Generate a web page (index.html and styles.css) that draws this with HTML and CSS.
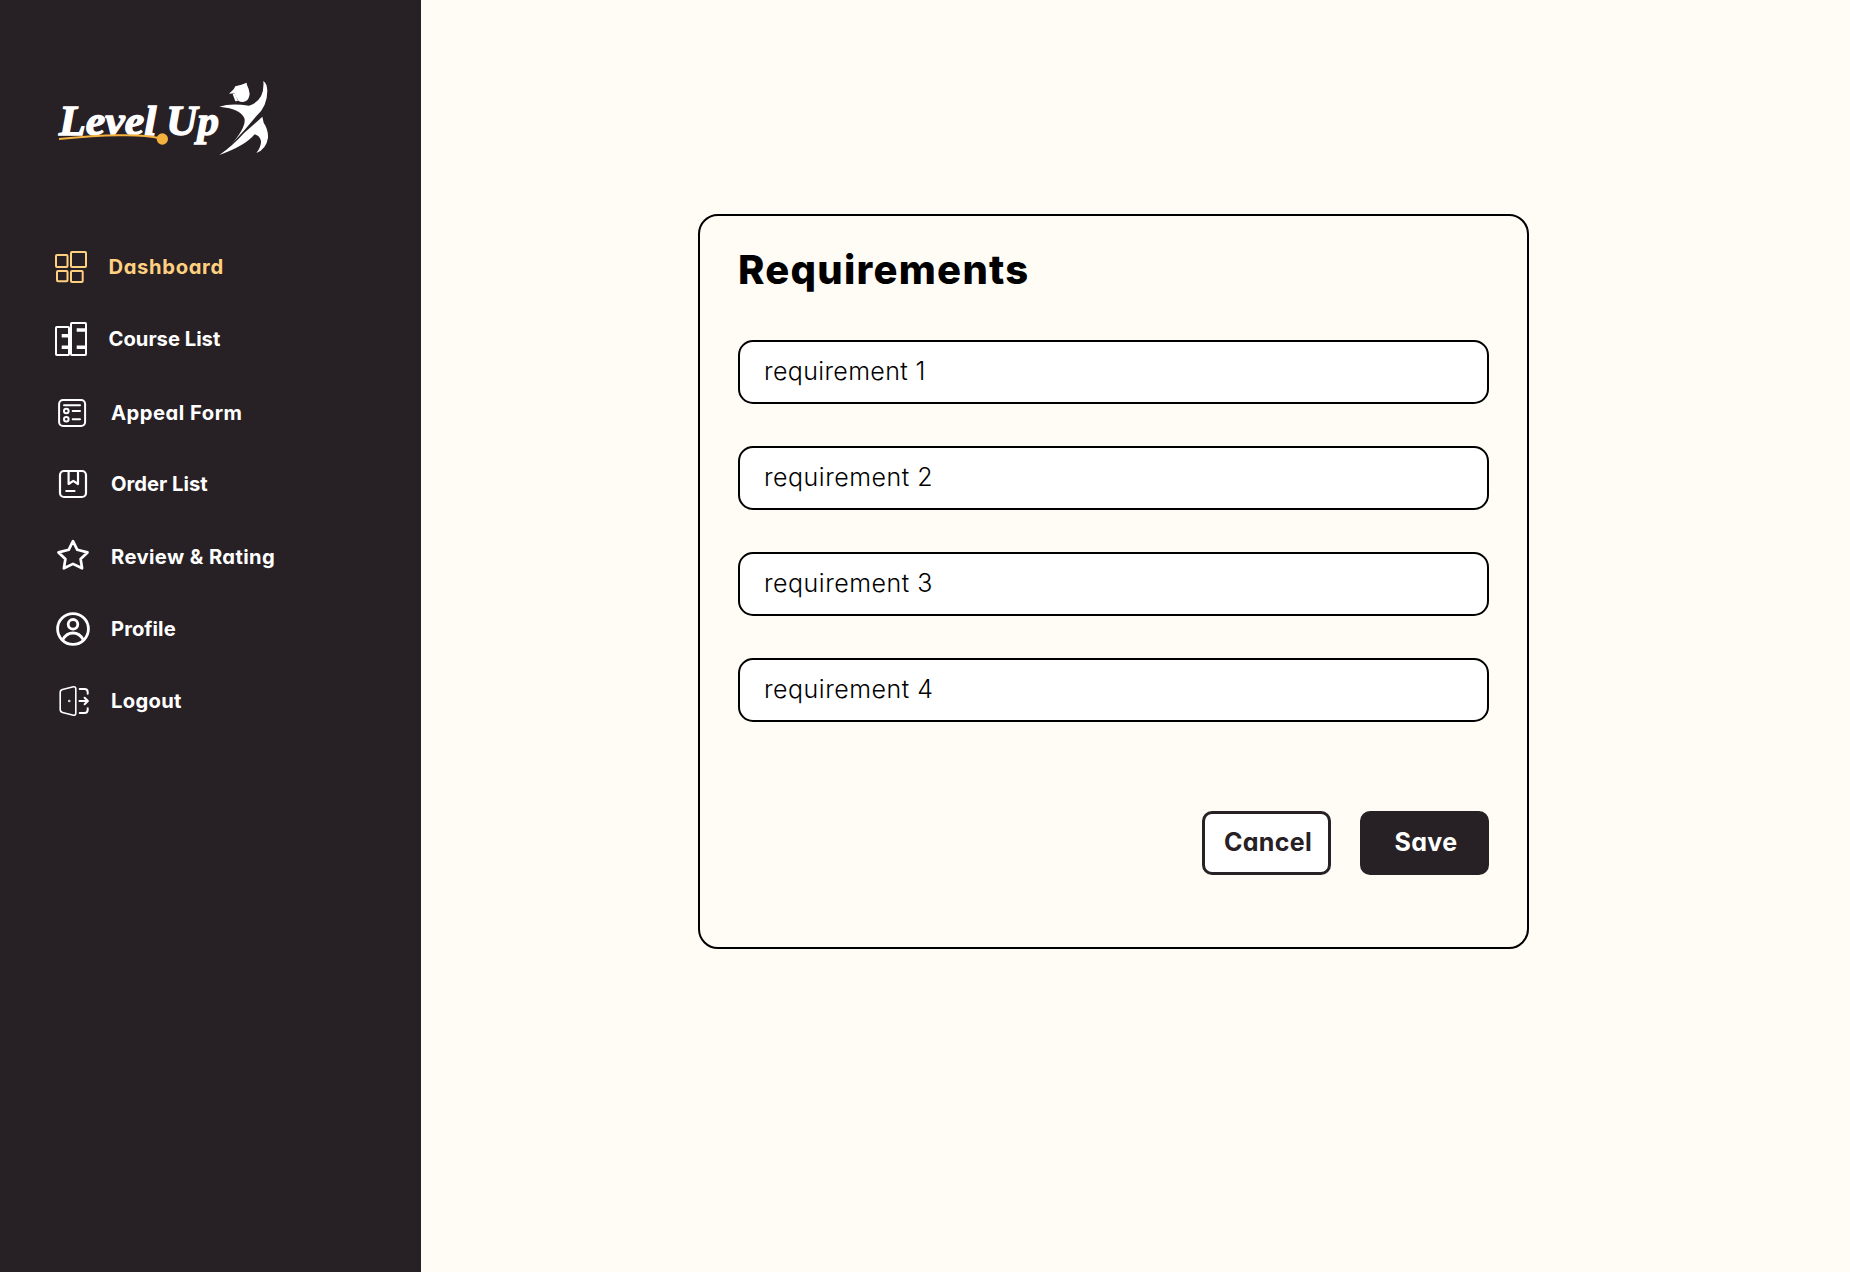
FILE: index.html
```
<!DOCTYPE html>
<html lang="en">
<head>
<meta charset="utf-8">
<title>Level Up – Requirements</title>
<link rel="stylesheet" href="styles.css">
</head>
<body>
<div class="layout">
  <aside class="sidebar">
    <svg class="logo" viewBox="0 0 720 285" role="img" aria-label="Level Up">
      <g class="logo-text">
        <text x="42" y="194" textLength="292" lengthAdjust="spacingAndGlyphs">Level</text>
        <text x="364" y="194" textLength="158" lengthAdjust="spacingAndGlyphs">Up</text>
      </g>
      <path class="swoosh" d="M42 207 Q150 197 220 196 Q300 194 345 205"/>
      <circle class="dot" cx="352" cy="207" r="17"/>
      <g class="figure">
        <path d="M552 71 L566 58 L571 49 Q590 44 605 38 L606 45 Q613 58 614 72 Q612 88 603 93 Q590 99 580 92 L572 79 L569 70 Z"/>
        <path d="M563 72 L569 70 L579 93 L571 94 Z"/>
        <path d="M523 110 Q556 99 612 107 Q660 92 655 33 Q666 40 667 62 Q667 108 635 137 L598 181 L557 225 Q601 176 599 148 Q591 116 523 110 Z"/>
        <path d="M523 255 Q565 225 598 188 L644 148 L652 140 L656 158 Q670 178 669 203 Q664 237 634 249 Q649 230 648 213 Q644 197 629 193 Q600 228 523 255 Z"/>
      </g>
    </svg>
    <nav class="menu">
      <a class="item item-dashboard active">
        <svg class="icon" viewBox="0 0 40 40" stroke-width="2"><rect x="5" y="8" width="11.5" height="12" rx="1"/><rect x="20" y="5" width="15" height="15" rx="1"/><rect x="6" y="24" width="10.5" height="10.3" rx="1"/><rect x="20" y="24" width="11.7" height="11" rx="1"/></svg>
        <span>Dashboard</span>
      </a>
      <a class="item item-courses">
        <svg class="icon" viewBox="0 0 40 40" stroke-width="2"><rect x="5" y="8" width="13" height="28" rx=".8"/><rect x="20" y="4" width="15" height="32" rx=".8"/><path stroke-width="3.6" d="M10.7 16.7H17M10.7 28.3H17M25.7 11H35M25.7 28.3H35"/></svg>
        <span>Course List</span>
      </a>
      <a class="item item-appeal">
        <svg class="icon" viewBox="0 0 40 40" stroke-width="2" stroke-linecap="round"><rect x="8.1" y="7" width="26" height="26" rx="4"/><path d="M13 12.3H29M21.7 18H29M21.7 26.3H29"/><circle cx="15.3" cy="18" r="2.3"/><circle cx="15.3" cy="26.3" r="2.3"/></svg>
        <span>Appeal Form</span>
      </a>
      <a class="item item-orders">
        <svg class="icon" viewBox="0 0 40 40" stroke-width="2.2" stroke-linecap="round" stroke-linejoin="round"><rect x="9" y="7" width="26" height="26" rx="4"/><path d="M17.6 7V20L22.3 16.8L27 20V7M15.3 27H23.5"/></svg>
        <span>Order List</span>
      </a>
      <a class="item item-reviews">
        <svg class="icon" viewBox="0 0 40 40" stroke-width="2.7" stroke-linejoin="round"><path d="M22 4.2L26.3 12.8L36.5 15.4L29.6 22L31.1 31.3L22 26.9L12.9 31.3L14.4 22L7.5 15.4L17.7 12.8Z"/></svg>
        <span>Review &amp; Rating</span>
      </a>
      <a class="item item-profile">
        <svg class="icon" viewBox="0 0 40 40" stroke-width="2.8"><circle cx="22" cy="20" r="15.4"/><circle cx="22" cy="15.3" r="4.8"/><path d="M11.8 30.6C14.3 26.2 17.8 24 22 24S29.7 26.2 32.2 30.6"/></svg>
        <span>Profile</span>
      </a>
      <a class="item item-logout">
        <svg class="icon" viewBox="0 0 40 40" stroke-width="1.6" stroke-linecap="round" stroke-linejoin="round"><path d="M11.5 8.6L22.4 5.8Q24.8 5.5 24.8 8V32Q24.8 34.5 22.4 34.2L11.5 31.4Q9.2 30.8 9.2 28.5V11.5Q9.2 9.2 11.5 8.6Z"/><circle cx="18.3" cy="20" r=".4"/><path stroke-width="2" d="M28.7 8H33.5Q36.7 8 36.7 11.2V12.7M28.7 32H33.5Q36.7 32 36.7 28.8V27.3M28.5 20H36.3M33.6 16.7L36.9 20L33.6 23.3"/></svg>
        <span>Logout</span>
      </a>
    </nav>
  </aside>
  <main class="content">
    <section class="card">
      <h1 class="title">Requirements</h1>
      <div class="fields">
        <div class="field">requirement 1</div>
        <div class="field">requirement 2</div>
        <div class="field">requirement 3</div>
        <div class="field">requirement 4</div>
      </div>
      <div class="actions">
        <button class="button button-cancel" type="button">Cancel</button>
        <button class="button button-save" type="button">Save</button>
      </div>
    </section>
  </main>
</div>
</body>
</html>
```
FILE: styles.css
```
* { box-sizing: border-box; }

body {
  margin: 0;
  font-family: Inter, "Open Sans", sans-serif;
  font-feature-settings: "cv11";
  background: #fffbf5;
  color: #000;
}

.layout { display: flex; min-height: 1272px; }

.sidebar {
  flex: none;
  width: 421px;
  padding: 70px 45px 0;
  background: #272125;
  color: #fff;
}

.logo { display: block; width: 240px; height: 95px; }
.logo-text { fill: #fff; font: italic 700 128px "Liberation Serif", serif; stroke: #fff; stroke-width: 4; }
.swoosh { fill: none; stroke: #f4b13e; stroke-width: 6; }
.dot { fill: #f4b13e; }
.figure { fill: #fff; }

.menu { display: flex; flex-direction: column; padding: 82px 0 0 6px; }

.item {
  display: flex;
  align-items: center;
  gap: 20px;
  height: 40px;
  margin-bottom: 32px;
  font-size: 20.2px;
  font-weight: 650;
  line-height: 40px;
  white-space: nowrap;
}

.icon { flex: none; width: 40px; height: 40px; fill: none; stroke: currentColor; }

.active { color: #ffd080; }
.item-dashboard { gap: 17.5px; letter-spacing: .65px; }
.item-courses { gap: 17.5px; margin-bottom: 34px; letter-spacing: 0; }
.item-appeal { margin-bottom: 31px; letter-spacing: .5px; }
.item-orders { margin-bottom: 33px; letter-spacing: 0; }
.item-reviews { letter-spacing: .4px; }
.item-profile { letter-spacing: .05px; }
.item-logout { letter-spacing: .3px; }

.content { flex: 1; display: flex; align-items: flex-start; padding: 214px 0 0 277px; }

.card {
  width: 831px;
  height: 735px;
  padding: 30px 38px 0;
  border: 2px solid #000;
  border-radius: 20px;
}

.title {
  margin: 0;
  font-size: 40px;
  font-weight: 800;
  line-height: 48px;
  letter-spacing: 1.25px;
}

.fields { display: flex; flex-direction: column; gap: 42px; margin-top: 46px; }

.field {
  height: 64px;
  padding: 0 24px;
  border: 2px solid #000;
  border-radius: 15px;
  background: #fff;
  font-size: 25px;
  font-weight: 300;
  line-height: 58px;
  letter-spacing: .5px;
}

.field:first-child { letter-spacing: .35px; }

.actions { display: flex; justify-content: flex-end; gap: 29px; margin-top: 89px; }

.button {
  width: 129px;
  height: 64px;
  padding: 0 0 2px 3px;
  border: 3px solid #272125;
  border-radius: 10px;
  font: 700 25px Inter, "Open Sans", sans-serif;
  font-feature-settings: "cv11";
  letter-spacing: .3px;
}

.button-cancel { background: #fff; color: #272125; }
.button-save { background: #272125; color: #fff; }
```
